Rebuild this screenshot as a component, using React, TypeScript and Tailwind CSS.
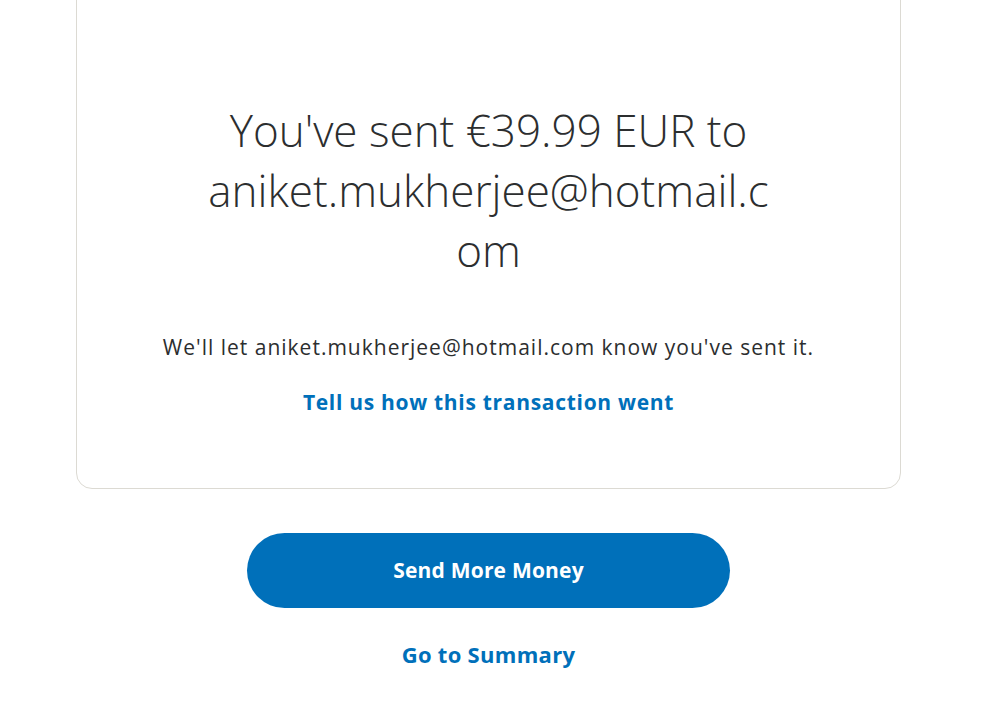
import React from "react";

export default function App() {
    return (
        <div className="min-h-screen bg-white overflow-hidden font-['Open_Sans',sans-serif]">
            <div className="ml-[76px] w-[825px] -mt-4 pt-[115px] pb-[72px] border border-[#dcdad3] rounded-2xl bg-white">
                <h1 className="mx-auto w-[572px] text-center text-[44px] leading-[60px] font-light text-[#2c2e2f] break-words">
                    You've sent €39.99 EUR to aniket.mukherjee@hotmail.com
                </h1>
                <p className="mt-[53px] text-center text-[21px] leading-[28px] tracking-[1px] text-[#2c2e2f]">
                    We'll let aniket.mukherjee@hotmail.com know you've sent it.
                </p>
                <div className="mt-[27px] flex justify-center">
                    <button className="text-[21px] leading-[28px] tracking-[0.7px] font-bold text-[#0070ba] hover:underline">
                        Tell us how this transaction went
                    </button>
                </div>
            </div>
            <div className="ml-[76px] w-[825px] flex flex-col items-center">
                <button className="mt-[44px] w-[483px] h-[75px] rounded-full bg-[#0070ba] text-white text-[21px] tracking-[0.2px] font-bold hover:bg-[#005ea6]">
                    Send More Money
                </button>
                <button className="mt-[32px] text-[22px] leading-[28px] tracking-[0.3px] font-bold text-[#0070ba] hover:underline">
                    Go to Summary
                </button>
            </div>
        </div>
    );
}
